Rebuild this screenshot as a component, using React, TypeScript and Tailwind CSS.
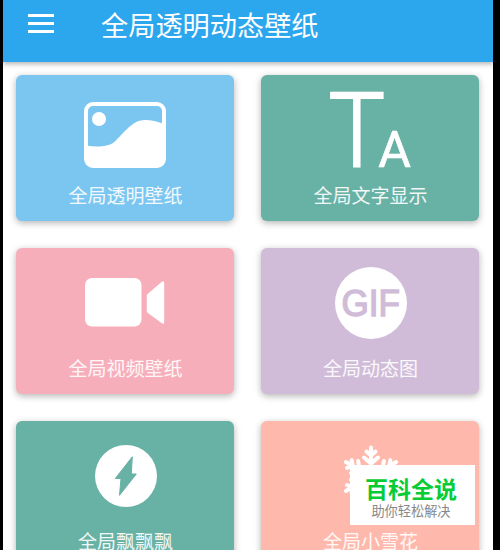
import type { ReactNode } from 'react';

type Feature = {
    label: string;
    color: string;
    icon: ReactNode;
};

const snowArms = [0, 60, 120, 180, 240, 300];

function PictureIcon() {
    return (
        <svg className="mt-[11px]" width="82" height="66" viewBox="0 0 82 66">
            <rect x="2" y="2" width="78" height="62" rx="7" fill="none" stroke="white" strokeWidth="4" />
            <circle cx="15" cy="17" r="7" fill="white" />
            <path d="M2 43.500C13 45.500 24 44.500 29 41C36 36 47 18.500 59 18.200C66 17.700 72 19.500 80 22V57Q80 64 73 64H9Q2 64 2 57Z" fill="white" />
        </svg>
    );
}

function LettersIcon() {
    return (
        <svg width="84" height="78" viewBox="0 0 84 78" className="ml-[2px] mt-[2px] overflow-visible fill-white stroke-white font-['Roboto',sans-serif]">
            <text transform="translate(-0.500 75.600) scale(0.92 1)" fontSize="103" fontWeight="300" strokeWidth="1.900">T</text>
            <text transform="translate(49.300 75.600) scale(1 1)" fontSize="50" fontWeight="400" strokeWidth="0.700">A</text>
        </svg>
    );
}

function VideoIcon() {
    return (
        <svg width="80" height="49" viewBox="0 0 80 49" fill="white">
            <rect x="0" y="0" width="56.500" height="48.500" rx="7" />
            <path d="M62.300 16.200L76.500 3.900Q79.200 2 79.200 4.800V44Q79.200 47 76.500 45L62.300 34.500Q61.800 34 61.800 33V17.500Q61.800 16.600 62.300 16.200Z" />
        </svg>
    );
}

function GifIcon() {
    return (
        <div className="ml-[2px] mt-[2px] flex h-[72px] w-[72px] items-center justify-center rounded-full bg-white">
            <svg width="60" height="32" viewBox="0 0 60 32" className="overflow-visible font-['Liberation_Sans',sans-serif]">
                <text x="0.500" y="29" fontSize="36" textLength="58.500" lengthAdjust="spacingAndGlyphs" stroke="#d0bcd8" strokeWidth="1.400" fill="#d0bcd8">GIF</text>
            </svg>
        </div>
    );
}

function BoltIcon() {
    return (
        <svg className="ml-[2px] mt-[2px]" width="62" height="62" viewBox="0 0 62 62">
            <circle cx="31" cy="31" r="31" fill="white" />
            <path d="M37.300 11.800L36.300 29H41.300L24.500 50.300L26 33.500H20.300Z" fill="#68b1a5" stroke="#68b1a5" strokeLinejoin="round" />
        </svg>
    );
}

function SnowIcon() {
    return (
        <svg className="ml-[2px] mt-[2px]" width="56" height="64" viewBox="-28 -32.500 56 64" fill="none" stroke="white" strokeWidth="4" strokeLinecap="round">
            {snowArms.map((angle) => (
                <path key={angle} d="M0 0V-29M-4.500 -25L0 -21L4.500 -25M-7 -19L0 -13L7 -19" transform={`rotate(${angle})`} />
            ))}
        </svg>
    );
}

const features: Feature[] = [
    { label: '全局透明壁纸', color: 'bg-[#7ac6f1]', icon: <PictureIcon /> },
    { label: '全局文字显示', color: 'bg-[#68b1a5]', icon: <LettersIcon /> },
    { label: '全局视频壁纸', color: 'bg-[#f7aebb]', icon: <VideoIcon /> },
    { label: '全局动态图', color: 'bg-[#d0bcd8]', icon: <GifIcon /> },
    { label: '全局飘飘飘', color: 'bg-[#68b1a5]', icon: <BoltIcon /> },
    { label: '全局小雪花', color: 'bg-[#ffb9ac]', icon: <SnowIcon /> }
];

function FeatureCard({ label, color, icon }: Feature) {
    return (
        <div className={`flex h-[146px] flex-col items-center rounded-[6px] shadow-[0_2px_7px_rgba(0,0,0,0.3)] ${color}`}>
            <div className="flex h-[108px] shrink-0 items-center justify-center">
                {icon}
            </div>
            <span className="-mt-[1.500px] text-[19px] leading-[26px] text-white/90">{label}</span>
        </div>
    );
}

export default function App() {
    return (
        <div className="relative h-[550px] w-[500px] overflow-hidden bg-black pl-[3px] pr-[7px] font-['Noto_Sans_CJK_SC',sans-serif]">
            <div className="h-full overflow-hidden bg-white">
                <header className="flex h-[62px] items-start bg-[#2ca6ed] pl-[25px] shadow-[0_2px_5px_rgba(0,0,0,0.3)]">
                    <button className="mt-[14px] flex w-[26px] flex-col gap-[5px]" aria-label="菜单">
                        <span className="h-[3px] bg-white" />
                        <span className="h-[3px] bg-white" />
                        <span className="h-[3px] bg-white" />
                    </button>
                    <h1 className="ml-[47px] mt-[4px] text-[27.200px] leading-[40px] text-white">全局透明动态壁纸</h1>
                </header>

                <main className="grid grid-cols-[218px_218px] gap-[27px] pl-[13.400px] pt-[13.400px]">
                    {features.map((feature) => (
                        <FeatureCard key={feature.label} {...feature} />
                    ))}
                </main>
            </div>

            {/* Site badge floating over the last card */}
            <div className="absolute left-[350px] top-[465px] flex h-[60px] w-[125px] flex-col items-center bg-white pr-[3px]">
                <span className="mt-[9px] text-[23px] font-bold leading-[28px] text-[#08cc36]">百科全说</span>
                <span className="mt-px text-[13.200px] leading-[16px] text-[#888]">助你轻松解决</span>
            </div>
        </div>
    );
}
